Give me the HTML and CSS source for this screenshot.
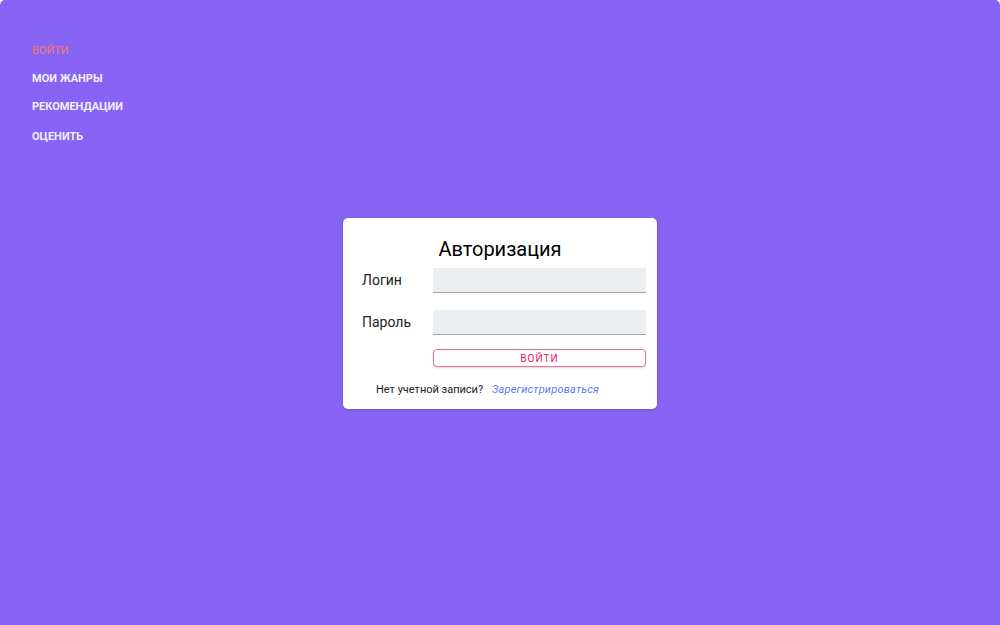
FILE: index.html
```html
<!DOCTYPE html>
<html lang="ru">
<head>
<meta charset="utf-8">
<link rel="stylesheet" href="styles.css">
</head>
<body>
<div class="app">
  <nav class="nav">
    <a class="nav-item active">Войти</a>
    <a class="nav-item">Мои жанры</a>
    <a class="nav-item">Рекомендации</a>
    <a class="nav-item last">Оценить</a>
  </nav>
  <main class="main">
    <div class="card">
      <h1 class="title">Авторизация</h1>
      <div class="row">
        <label class="label">Логин</label>
        <div class="input"></div>
      </div>
      <div class="row">
        <label class="label">Пароль</label>
        <div class="input"></div>
      </div>
      <div class="row btn-row">
        <span class="label"></span>
        <button class="btn">Войти</button>
      </div>
      <p class="footer">Нет учетной записи? <a class="link">Зарегистрироваться</a></p>
    </div>
  </main>
</div>
</body>
</html>
```
FILE: styles.css
```css
html, body {
  margin: 0;
  padding: 0;
  background: #ffffff;
  font-family: Roboto, "Liberation Sans", sans-serif;
  overflow: hidden;
}
.app {
  background: #8864f4;
  border-radius: 5px 5px 0 0;
  height: 100vh;
  display: flex;
  flex-direction: column;
}
.nav {
  display: flex;
  flex-direction: column;
  padding: 44px 0 0 32px;
}
.nav-item {
  font-size: 11px;
  font-weight: 700;
  text-transform: uppercase;
  color: #f3f0ff;
  line-height: 13px;
  height: 28px;
}
.nav-item.active {
  color: #f4786c;
  font-weight: 400;
}
.nav-item.last {
  margin-top: 2px;
}
.main {
  display: flex;
  justify-content: center;
  padding-top: 60px;
}
.card {
  width: 314px;
  background: #fff;
  border-radius: 5px;
  box-shadow: 0 1px 3px rgba(0,0,0,0.2);
  padding: 18px 11px 14px 19px;
  box-sizing: border-box;
  height: 191px;
}
.title {
  margin: 0 0 6px 0;
  font-size: 20px;
  font-weight: 400;
  color: #000;
  text-align: center;
  line-height: 26px;
  padding-right: 8px;
}
.row {
  display: flex;
  align-items: center;
  margin-bottom: 17px;
}
.label {
  width: 71px;
  font-size: 14px;
  color: #222;
  position: relative;
  top: -1px;
}
.input {
  flex: 1;
  height: 24px;
  background: #eceff1;
  border-bottom: 1px solid #9ea6aa;
}
.btn-row {
  margin-top: -3px;
  margin-bottom: 0;
}
.btn {
  flex: 1;
  height: 18px;
  box-sizing: border-box;
  background: #fff;
  border: 1px solid #ef6f93;
  border-radius: 4px;
  color: #e2185b;
  font-family: Roboto, "Liberation Sans", sans-serif;
  font-size: 10px;
  letter-spacing: 1px;
  text-transform: uppercase;
  padding: 0;
  box-shadow: 0 1px 2px rgba(0,0,0,0.15);
}
.footer {
  margin: 16px 0 0 0;
  font-size: 11px;
  color: #222;
  padding-left: 14px;
}
.link {
  color: #5b7cf0;
  font-style: italic;
  margin-left: 6px;
  letter-spacing: 0.2px;
}
```
